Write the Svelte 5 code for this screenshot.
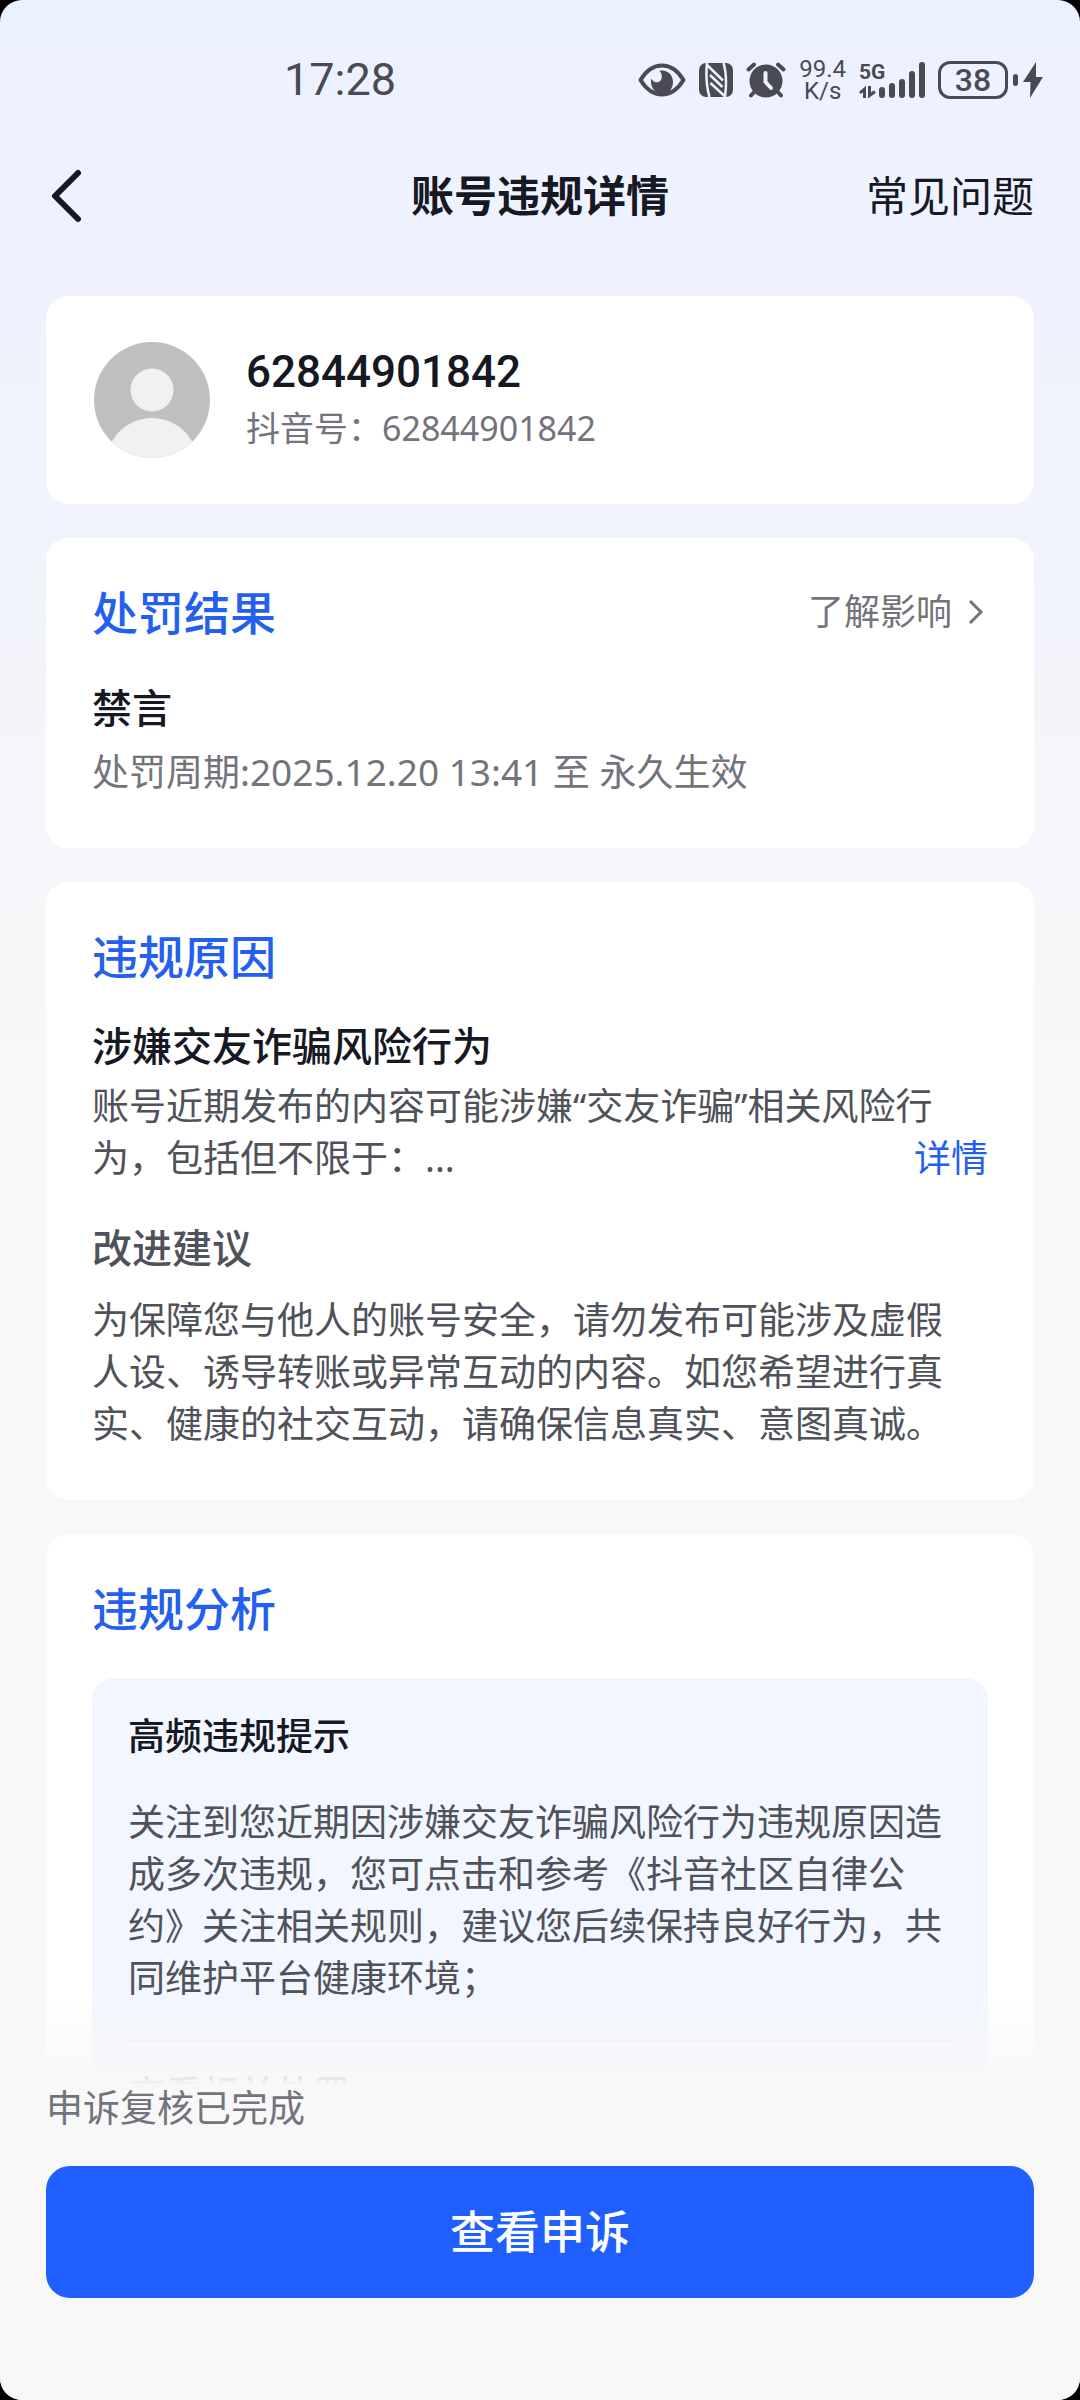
<script lang="ts">
  const account = {
    name: '62844901842',
    douyinId: '62844901842',
  };

  const penalty = {
    title: '禁言',
    period: '2025.12.20 13:41 至 永久生效',
  };

  const reason = {
    title: '涉嫌交友诈骗风险行为',
    summary: '账号近期发布的内容可能涉嫌“交友诈骗”相关风险行为，包括但不限于：...',
    advice:
      '为保障您与他人的账号安全，请勿发布可能涉及虚假人设、诱导转账或异常互动的内容。如您希望进行真实、健康的社交互动，请确保信息真实、意图真诚。',
  };

  const analysis = [
    {
      title: '高频违规提示',
      text: '关注到您近期因涉嫌交友诈骗风险行为违规原因造成多次违规，您可点击和参考《抖音社区自律公约》关注相关规则，建议您后续保持良好行为，共同维护平台健康环境；',
    },
    { title: '查看相关处罚', text: '' },
  ];

  // height of each signal bar, left to right
  const signal = [11, 15, 19, 27, 36];
</script>

<div class="screen">
  <div class="status">
    <span class="status__time">17:28</span>
    <div class="status__icons">
      <svg width="48" height="34" viewBox="0 0 48 34" aria-hidden="true">
        <path d="M2.5 17C8 8 15.500 2.500 24 2.500S40 8 45.500 17C40 26 32.500 31.500 24 31.500S8 26 2.500 17Z" fill="none" stroke="currentColor" stroke-width="4" stroke-linejoin="round" />
        <path d="M24 7.500c6.500 0 11 5 11 11.500S30.500 31 24.500 31 13 26 13 18.500c0-1 .2-2 .5-3 1.500 3.500 4.500 4.500 7 3.500 4-1.500 4.500-7.500 1-11.300.8-.2 1.700-.2 2.500-.2Z" fill="currentColor" />
      </svg>
      <svg width="34" height="34" viewBox="0 0 34 34" aria-hidden="true">
        <rect width="34" height="34" rx="7" fill="currentColor" />
        <path d="M8 0C7 10 7.500 24 10.500 34M24.500 0C27 8 27.500 22 26 34M8 2l16 15.500M11 12l12.500 12M11.500 20 26 33.500" fill="none" stroke="#eef1ff" stroke-width="2.500" />
      </svg>
      <svg width="40" height="36" viewBox="0 0 40 36" aria-hidden="true">
        <circle cx="20" cy="19" r="16.500" fill="currentColor" />
        <path d="M2.500 7.500 8 2.500M32 2.500l5.500 5M9 29l-4 4.500M31 29l4 4.500" stroke="currentColor" stroke-width="4" stroke-linecap="round" />
        <path d="M19.500 11v9l5.500 6" fill="none" stroke="#eef1ff" stroke-width="4" stroke-linecap="round" stroke-linejoin="round" />
      </svg>
      <span class="status__speed">99.4<br />K/s</span>
      <svg class="status__signal" width="66" height="38" viewBox="0 0 66 38" aria-hidden="true">
        <text class="status__net" x="0" y="18">5G</text>
        <path d="M5.500 37V28L1 32M10.500 25v9.500L16 30.500" fill="none" stroke="currentColor" stroke-width="3" />
        {#each signal as h, i}
          <rect x={20 + i * 10} y={37 - h} width="6" height={h} rx="3" fill="currentColor" />
        {/each}
      </svg>
      <div class="status__power">
        <span class="status__battery">38</span>
        <span class="status__nub"></span>
        <svg width="20" height="38" viewBox="0 0 20 38" aria-hidden="true">
          <path d="M13 1 0 21h7.500L7 37 20 16h-7Z" fill="currentColor" />
        </svg>
      </div>
    </div>
  </div>

  <header class="nav">
    <button type="button" class="nav__back" aria-label="返回">
      <svg width="30" height="54" viewBox="0 0 30 54">
        <path d="M27 4 4 27l23 23" fill="none" stroke="currentColor" stroke-width="6" stroke-linecap="round" stroke-linejoin="round" />
      </svg>
    </button>
    <h1 class="nav__title">账号违规详情</h1>
    <a class="nav__faq" href="#faq">常见问题</a>
  </header>

  <main class="content">
    <section class="card card--profile">
      <svg width="116" height="116" viewBox="0 0 116 116" aria-hidden="true">
        <defs>
          <clipPath id="avatar-clip"><circle cx="58" cy="58" r="58" /></clipPath>
        </defs>
        <g clip-path="url(#avatar-clip)">
          <rect width="116" height="116" fill="#bfbfbf" />
          <circle cx="58" cy="48" r="21.500" fill="#f1f1f1" />
          <circle cx="58" cy="122" r="46" fill="#f1f1f1" />
        </g>
      </svg>
      <div>
        <p class="profile__name">{account.name}</p>
        <p class="profile__id">抖音号：{account.douyinId}</p>
      </div>
    </section>

    <section class="card">
      <div class="card__head">
        <h2 class="card__title">处罚结果</h2>
        <a class="card__more" href="#impact">
          了解影响
          <svg width="20" height="26" viewBox="0 0 20 26" aria-hidden="true">
            <path d="M2 2l11 11L2 24" fill="none" stroke="currentColor" stroke-width="3" />
          </svg>
        </a>
      </div>
      <h3 class="subtitle subtitle--first">{penalty.title}</h3>
      <p class="text text--muted text--period">处罚周期:{penalty.period}</p>
    </section>

    <section class="card">
      <h2 class="card__title">违规原因</h2>
      <h3 class="subtitle subtitle--reason">{reason.title}</h3>
      <div class="summary">
        <p class="text">{reason.summary}</p>
        <a class="summary__link" href="#detail">详情</a>
      </div>
      <h3 class="subtitle subtitle--advice">改进建议</h3>
      <p class="text text--advice">{reason.advice}</p>
    </section>

    <section class="card">
      <h2 class="card__title">违规分析</h2>
      <div class="panel">
        {#each analysis as item}
          <div class="panel__item">
            <h3 class="panel__title">{item.title}</h3>
            {#if item.text}
              <p class="panel__text">{item.text}</p>
            {/if}
          </div>
        {/each}
      </div>
    </section>
  </main>

  <footer class="footer">
    <p class="footer__note">申诉复核已完成</p>
    <button type="button" class="footer__button">查看申诉</button>
  </footer>
</div>

<style>
  :global(body) {
    margin: 0;
    background: #000;
  }

  .screen {
    display: flex;
    flex-direction: column;
    height: 100vh;
    overflow: hidden;
    border-radius: 22px;
    background: linear-gradient(180deg, #eaf2ff 0, #eef1ff 80px, #eff2fe 300px, #f8f8f8 1080px);
    color: #161823;
    font-family: 'Noto Sans', 'Noto Sans CJK SC', sans-serif;
  }

  h1,
  h2,
  h3,
  p {
    margin: 0;
  }

  a {
    color: inherit;
    text-decoration: none;
  }

  button {
    padding: 0;
    border: 0;
    background: none;
    color: inherit;
    font-family: inherit;
    cursor: pointer;
  }

  svg {
    display: block;
    flex: none;
  }

  .status {
    display: flex;
    align-items: center;
    justify-content: space-between;
    flex: none;
    height: 160px;
    padding: 0 37px 0 284px;
    color: #494a52;
    font-family: Roboto, sans-serif;
  }

  .status__time {
    font-size: 45px;
    line-height: 52px;
  }

  .status__icons {
    display: flex;
    align-items: center;
    gap: 13px;
  }

  .status__speed {
    font-size: 24px;
    line-height: 22px;
    text-align: center;
  }

  .status__signal {
    overflow: visible;
  }

  .status__net {
    font-size: 21px;
    font-weight: 700;
    fill: currentColor;
  }

  .status__power {
    display: flex;
    align-items: center;
    gap: 5px;
  }

  .status__battery {
    box-sizing: border-box;
    width: 70px;
    border: 3px solid currentColor;
    border-radius: 12px;
    font-size: 32px;
    font-weight: 500;
    line-height: 32px;
    text-align: center;
  }

  .status__nub {
    width: 5px;
    height: 12px;
    border-radius: 3px;
    background: currentColor;
  }

  .nav {
    display: grid;
    grid-template-columns: 1fr auto 1fr;
    align-items: center;
    flex: none;
    height: 72px;
    padding: 0 46px;
  }

  .nav__back {
    justify-self: start;
    padding-left: 5px;
  }

  .nav__title {
    font-size: 43px;
    font-weight: 700;
    line-height: 60px;
  }

  .nav__faq {
    justify-self: end;
    font-size: 42px;
    line-height: 60px;
  }

  .content {
    display: flex;
    flex-direction: column;
    flex: 1;
    gap: 34px;
    min-height: 0;
    padding: 64px 46px 0;
    overflow: hidden;
  }

  .card {
    flex: none;
    padding: 44px 46px 50px;
    border-radius: 22px;
    background: #fff;
  }

  .card--profile {
    display: flex;
    align-items: flex-start;
    gap: 36px;
    padding: 46px 48px;
  }

  .profile__name {
    font-family: Roboto, sans-serif;
    font-size: 44px;
    font-weight: 500;
    line-height: 60px;
  }

  .profile__id {
    color: #73747b;
    font-size: 34px;
    line-height: 52px;
  }

  .card__head {
    display: flex;
    align-items: center;
    justify-content: space-between;
  }

  .card__title {
    color: #245ff0;
    font-size: 46px;
    font-weight: 500;
    line-height: 60px;
  }

  .card__more {
    display: flex;
    align-items: center;
    gap: 16px;
    color: #73747b;
    font-size: 36px;
    line-height: 60px;
  }

  .subtitle {
    font-size: 40px;
    font-weight: 500;
    line-height: 56px;
  }

  .subtitle--first {
    margin-top: 38px;
  }

  .subtitle--reason {
    margin-top: 32px;
  }

  .subtitle--advice {
    margin-top: 36px;
    color: #50525a;
  }

  .text {
    padding-right: 16px;
    color: #50525a;
    font-size: 37px;
    line-height: 52px;
  }

  .text--muted {
    color: #73747b;
  }

  .text--period {
    margin-top: 10px;
  }

  .text--advice {
    margin-top: 18px;
  }

  .summary {
    position: relative;
    margin-top: 6px;
  }

  .summary__link {
    position: absolute;
    right: 0;
    bottom: 0;
    color: #245ff0;
    font-size: 37px;
    line-height: 52px;
  }

  .panel {
    margin-top: 40px;
    padding: 0 36px;
    border-radius: 22px;
    background: #f2f6ff;
  }

  .panel__item {
    padding: 32px 0 36px;
  }

  .panel__item + .panel__item {
    padding-top: 26px;
    border-top: 2px solid #e6e8f2;
  }

  .panel__title {
    font-size: 37px;
    font-weight: 500;
    line-height: 52px;
  }

  .panel__text {
    margin-top: 34px;
    color: #50525a;
    font-size: 37px;
    line-height: 52px;
  }

  .footer {
    position: relative;
    flex: none;
    padding: 0 46px 102px;
    background: #f8f8f8;
  }

  .footer::before {
    content: '';
    position: absolute;
    right: 0;
    bottom: 100%;
    left: 0;
    height: 90px;
    background: linear-gradient(180deg, rgba(248, 248, 248, 0), rgba(248, 248, 248, 0.98));
    pointer-events: none;
  }

  .footer__note {
    color: #73747b;
    font-size: 37px;
    line-height: 48px;
  }

  .footer__button {
    display: block;
    width: 100%;
    height: 132px;
    margin-top: 34px;
    padding-bottom: 6px;
    border-radius: 24px;
    background: #1f5fff;
    color: #fff;
    font-size: 45px;
    font-weight: 500;
  }
</style>
